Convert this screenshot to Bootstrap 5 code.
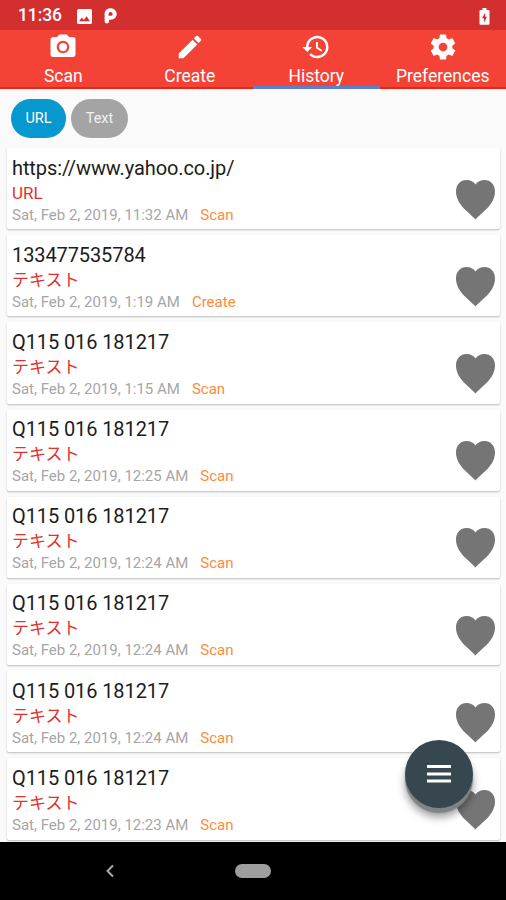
<!DOCTYPE html>
<html lang="en">
<head>
<meta charset="utf-8">
<meta name="viewport" content="width=device-width, initial-scale=1">
<title>History</title>
<link href="https://cdn.jsdelivr.net/npm/bootstrap@5.3.0/dist/css/bootstrap.min.css" rel="stylesheet">
<style>
  body { font-family: Roboto, "Noto Sans CJK JP", sans-serif; background: #fafafa; line-height: 1; }
  .phone { width: 506px; height: 900px; }
  .statusbar { height: 30px; background: #d32f2f; padding: 2px 16px 0 18px; }
  .clock { font-size: 17.5px; font-weight: 500; width: 59px; letter-spacing: -.1px; }
  .status-p { margin-left: 12px; }
  .tabs { height: 59px; background: #f44336; border-bottom: 2px solid #ea2410; }
  .tabs .nav-link { height: 59px; margin-bottom: -2px; padding: 2px 0 0; color: #fff; font-size: 17.5px; border-bottom: 3px solid transparent; border-radius: 0; }
  .tabs .nav-link.active { border-bottom-color: #5c7fd0; }
  .tabs svg { width: 30px; height: 30px; margin-bottom: 6px; }
  .chips { height: 59px; padding: 10px 11px 0; gap: 5px; }
  .chip { height: 39px; border-radius: 20px; border: 0; padding: 1px 0 0; font-size: 14.5px; color: #fff; background: #a4a4a4; }
  .chip-on { width: 55px; background: #0798cf; }
  .chip-off { width: 57px; color: #f2f2f2; }
  .history { gap: 6px; padding: 0 6px 0 7px; }
  .entry { height: 81.2px; flex: none; border: 0; border-radius: 2px; background: #fff; box-shadow: 0 1px 2px rgba(0,0,0,.25); padding: 8.5px 4px 0 5px; }
  .entry-title { font-size: 20px; line-height: 22px; letter-spacing: -.1px; color: #1c1c1c; }
  .entry-kind { font-size: 17px; line-height: 28px; height: 26px; color: #e5302c; }
  .entry-meta { font-size: 15px; line-height: 20px; color: #a6a6a6; gap: 12px; }
  .entry-source { color: #fb8c3c; }
  .heart { width: 41px; height: 41px; margin-top: 22.2px; fill: #757575; }
  .fab { left: 405px; top: 740px; width: 68px; height: 68px; background: #37474f; border: 0; box-shadow: 0 5px 1px #7f8587, 0 9px 9px rgba(0,0,0,.4); }
  .navbar-system { height: 58px; background: #000; }
  .nav-back { left: 104px; top: 22px; }
  .nav-pill { width: 36px; height: 14px; background: #9e9e9e; }
</style>
</head>
<body>
<div class="phone d-flex flex-column position-relative overflow-hidden">
  <header class="statusbar d-flex align-items-center text-white flex-shrink-0">
    <span class="clock">11:36</span>
    <svg width="15" height="15" viewBox="0 0 15 15"><path fill="#fff" fill-rule="evenodd" d="M1.6 0h11.8Q15 0 15 1.6v11.8q0 1.6-1.6 1.6H1.6Q0 15 0 13.400V1.600Q0 0 1.600 0zM2 12.300h11L9.600 7.300 6.900 10.900 4.900 8.600z"/></svg>
    <svg class="ms-auto order-last" width="11" height="17" viewBox="0 0 11 17"><path fill="#fff" fill-rule="evenodd" d="M3.500 0h4v2H9.500Q10.500 2 10.500 3v12.800q0 1-1 1h-8q-1 0-1-1V3q0-1 1-1h2zM6.200 4.500 3 10.200h2v4.300l3-5.700H6.200z"/></svg>
    <svg class="status-p" width="13" height="16" viewBox="0 0 13 16"><path fill="#fff" fill-rule="evenodd" d="M6.500.3C10 .3 12.700 2.800 12.700 6S10 11.700 6.700 11.700H5v1.800q0 2-2.200 2T.6 13.500V6C.6 2.800 3 .3 6.500.3zM6.700 4Q4.500 4 4.500 6v1.800h2.200q2 0 2-1.900T6.700 4z"/></svg>
  </header>

  <nav class="tabs nav nav-justified flex-nowrap flex-shrink-0">
    <a class="nav-link d-flex flex-column align-items-center w-25" href="#"><svg viewBox="0 0 24 24" fill="#fff"><path fill-rule="evenodd" d="M9 2 7.170 4H4c-1.100 0-2 .9-2 2v12c0 1.100.9 2 2 2h16c1.100 0 2-.9 2-2V6c0-1.100-.9-2-2-2h-3.170L15 2H9zm3 15c-2.760 0-5-2.240-5-5s2.240-5 5-5 5 2.240 5 5-2.240 5-5 5z"/><circle cx="12" cy="12" r="3.300"/></svg><span>Scan</span></a>
    <a class="nav-link d-flex flex-column align-items-center w-25" href="#"><svg viewBox="0 0 24 24" fill="#fff"><path d="M3 17.250V21h3.750L17.810 9.940l-3.750-3.750L3 17.250zM20.710 7.040c.39-.39.39-1.020 0-1.410l-2.340-2.340c-.39-.39-1.020-.39-1.410 0l-1.830 1.830 3.750 3.750 1.830-1.830z"/></svg><span>Create</span></a>
    <a class="nav-link active d-flex flex-column align-items-center w-25" href="#"><svg viewBox="0 0 24 24" fill="#fff"><path d="M13 3c-4.970 0-9 4.030-9 9H1l3.890 3.890.07.140L9 12H6c0-3.870 3.130-7 7-7s7 3.130 7 7-3.130 7-7 7c-1.930 0-3.680-.79-4.940-2.060l-1.420 1.420C8.270 19.990 10.510 21 13 21c4.970 0 9-4.030 9-9s-4.030-9-9-9zm-1 5v5l4.280 2.540.72-1.210-3.500-2.080V8H12z"/></svg><span>History</span></a>
    <a class="nav-link d-flex flex-column align-items-center w-25" href="#"><svg viewBox="0 0 24 24" fill="#fff"><path d="M19.430 12.980c.04-.32.07-.64.07-.98s-.03-.66-.07-.98l2.110-1.650c.19-.15.24-.42.12-.64l-2-3.460c-.12-.22-.39-.3-.61-.22l-2.490 1c-.52-.4-1.080-.73-1.690-.98l-.38-2.650C14.460 2.180 14.250 2 14 2h-4c-.25 0-.46.18-.49.42l-.38 2.650c-.61.25-1.170.59-1.690.98l-2.490-1c-.23-.09-.49 0-.61.22l-2 3.460c-.13.22-.07.49.12.64l2.110 1.650c-.04.32-.07.65-.07.98s.03.66.07.98l-2.110 1.650c-.19.15-.24.42-.12.64l2 3.460c.12.22.39.3.61.22l2.490-1c.52.4 1.080.73 1.690.98l.38 2.650c.03.24.24.42.49.42h4c.25 0 .46-.18.49-.42l.38-2.650c.61-.25 1.170-.59 1.690-.98l2.490 1c.23.09.49 0 .61-.22l2-3.460c.12-.22.07-.49-.12-.64l-2.110-1.650zM12 15.500c-1.930 0-3.500-1.570-3.500-3.500s1.570-3.500 3.500-3.500 3.500 1.570 3.500 3.500-1.570 3.500-3.500 3.500z"/></svg><span>Preferences</span></a>
  </nav>

  <div class="chips d-flex flex-shrink-0">
    <button class="chip chip-on">URL</button>
    <button class="chip chip-off">Text</button>
  </div>

  <main class="history d-flex flex-column flex-grow-1 overflow-hidden" id="history"></main>

  <button class="fab position-absolute rounded-circle d-flex align-items-center justify-content-center p-0" aria-label="Menu">
    <svg width="24" height="19" viewBox="0 0 24 19" fill="#fff"><path d="M0 0h24v3H0zM0 7.500h24v3H0zM0 14.500h24v3H0z"/></svg>
  </button>

  <footer class="navbar-system position-relative d-flex align-items-center justify-content-center flex-shrink-0">
    <svg class="nav-back position-absolute" width="12" height="14" viewBox="0 0 12 14"><path d="M9 1.500 3.500 7 9 12.500" fill="none" stroke="#aaa" stroke-width="2"/></svg>
    <span class="nav-pill rounded-pill"></span>
  </footer>
</div>
<script>
  const rows = [
    ['https://www.yahoo.co.jp/', 'URL', '11:32', 'Scan'],
    ['133477535784', 'テキスト', '1:19', 'Create'],
    ['Q115 016 181217', 'テキスト', '1:15', 'Scan'],
    ['Q115 016 181217', 'テキスト', '12:25', 'Scan'],
    ['Q115 016 181217', 'テキスト', '12:24', 'Scan'],
    ['Q115 016 181217', 'テキスト', '12:24', 'Scan'],
    ['Q115 016 181217', 'テキスト', '12:24', 'Scan'],
    ['Q115 016 181217', 'テキスト', '12:23', 'Scan']
  ];
  document.getElementById('history').innerHTML = rows.map(([title, kind, time, source]) => `
    <article class="entry d-flex justify-content-between">
      <div>
        <div class="entry-title">${title}</div>
        <div class="entry-kind">${kind}</div>
        <div class="entry-meta d-flex"><span>Sat, Feb 2, 2019, ${time} AM</span><span class="entry-source">${source}</span></div>
      </div>
      <svg class="heart" viewBox="0 0 41 41"><path d="M20.500 40.500C15 34 1 26 1 12.500 1 5.500 5.500 1 11.500 1c4 0 7 1.700 9 4.500 2-2.800 5-4.500 9-4.500C35.500 1 40 5.500 40 12.500 40 26 26 34 20.500 40.500z"/></svg>
    </article>`).join('');
</script>
<script src="https://cdn.jsdelivr.net/npm/bootstrap@5.3.0/dist/js/bootstrap.bundle.min.js"></script>
</body>
</html>
